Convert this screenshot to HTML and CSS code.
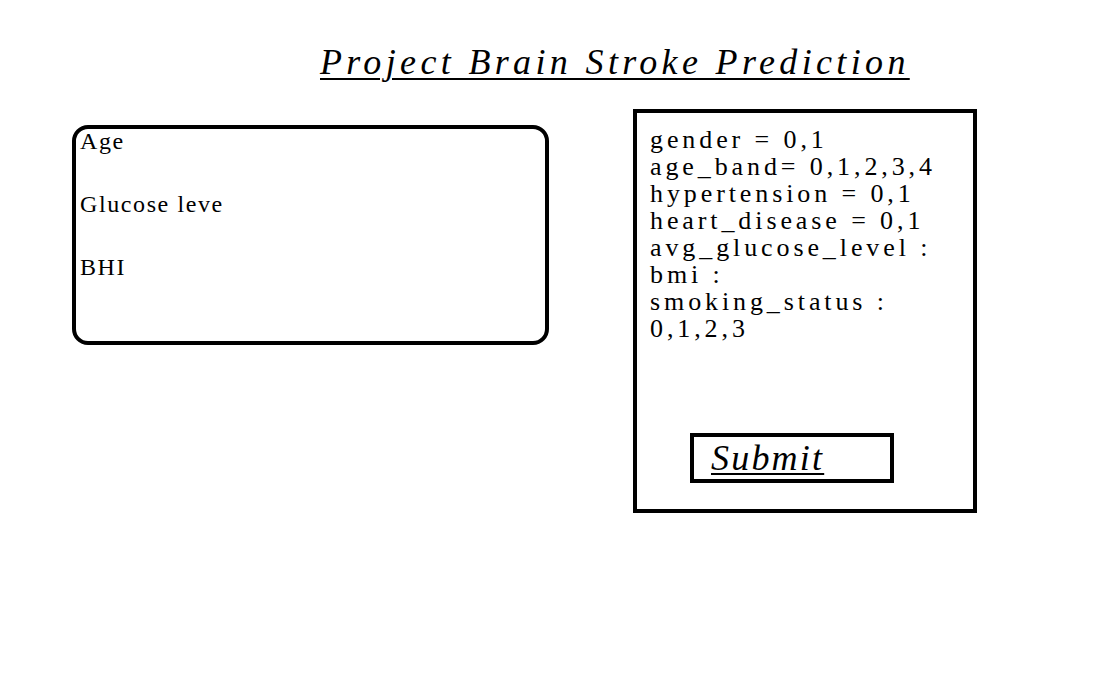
FILE: index.html
```html
<!DOCTYPE html>
<html lang="en">
<head>
<meta charset="utf-8">
<title>Project Brain Stroke Prediction</title>
<link rel="stylesheet" href="styles.css">
</head>
<body>
<h1 class="title">Project Brain Stroke Prediction</h1>
<div class="row">
  <div class="inputs">
    <div class="label">Age</div>
    <div class="label">Glucose leve</div>
    <div class="label">BHI</div>
  </div>
  <div class="legend">
    <div class="legend-text">
      <div class="line">gender = 0,1</div>
      <div class="line">age_band= 0,1,2,3,4</div>
      <div class="line">hypertension = 0,1</div>
      <div class="line">heart_disease = 0,1</div>
      <div class="line">avg_glucose_level :</div>
      <div class="line">bmi :</div>
      <div class="line">smoking_status :</div>
      <div class="line">0,1,2,3</div>
    </div>
    <button class="submit" type="button">Submit</button>
  </div>
</div>
</body>
</html>
```
FILE: styles.css
```css
html, body {
  margin: 0;
  padding: 0;
  background: #ffffff;
  color: #000000;
  font-family: "Liberation Serif", "Times New Roman", serif;
}

.title {
  margin: 0;
  padding: 44px 0 0 320px;
  font-size: 36px;
  line-height: 36px;
  font-weight: normal;
  font-style: italic;
  text-decoration: underline;
  text-decoration-thickness: 2px;
  text-underline-offset: 4px;
  letter-spacing: 4.35px;
  white-space: nowrap;
}

.row {
  display: flex;
  align-items: flex-start;
  gap: 84px;
  padding: 29px 0 0 72px;
}

.inputs {
  box-sizing: border-box;
  width: 477px;
  height: 220px;
  margin-top: 16px;
  border: 4px solid #000;
  border-radius: 16px;
  padding: 0 0 0 4px;
  display: flex;
  flex-direction: column;
  gap: 39px;
}

.label {
  font-size: 24px;
  line-height: 24px;
  letter-spacing: 1.6px;
  white-space: nowrap;
}

.legend {
  box-sizing: border-box;
  width: 344px;
  height: 404px;
  border: 4px solid #000;
  padding: 13px 0 0 13px;
  display: flex;
  flex-direction: column;
  align-items: flex-start;
}

.line {
  font-size: 26px;
  line-height: 27px;
  letter-spacing: 3.9px;
  white-space: nowrap;
}

.submit {
  box-sizing: border-box;
  margin: auto 0 26px 40px;
  width: 204px;
  height: 50px;
  border: 4px solid #000;
  background: #fff;
  color: #000;
  padding: 0 0 0 17px;
  text-align: left;
  font-family: "Liberation Serif", "Times New Roman", serif;
  font-size: 36px;
  line-height: 40px;
  font-style: italic;
  text-decoration: underline;
  text-decoration-thickness: 2px;
  text-underline-offset: 3px;
  letter-spacing: 2.2px;
  cursor: pointer;
}
```
